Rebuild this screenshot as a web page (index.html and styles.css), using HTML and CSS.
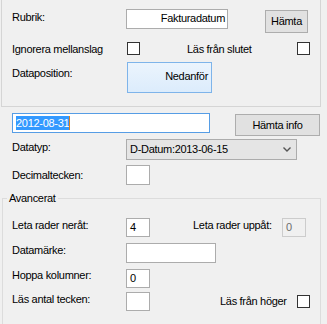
FILE: index.html
```html
<!DOCTYPE html>
<html lang="sv">
<head>
<meta charset="utf-8">
<link rel="stylesheet" href="styles.css">
</head>
<body>
<div class="top">
  <div class="row r1">
    <span class="lbl w114 mt2">Rubrik:</span>
    <div class="tb rubrik">Fakturadatum</div>
    <div class="btn hamta">Hämta</div>
  </div>
  <div class="row r2">
    <span class="lbl w115 mt1">Ignorera mellanslag</span>
    <span class="cb"></span>
    <span class="lbl slut mt1">Läs från slutet</span>
    <span class="cb"></span>
  </div>
  <div class="row r3">
    <span class="lbl w115 mt5">Dataposition:</span>
    <div class="btn nedan">Nedanför</div>
  </div>
</div>
<div class="mid">
  <div class="row r4">
    <div class="tb date"><span class="sel">2012-08-31</span><span class="caret"></span></div>
    <div class="btn info">Hämta info</div>
  </div>
  <div class="row r5">
    <span class="lbl w114 mt2">Datatyp:</span>
    <div class="dd"><span>D-Datum:2013-06-15</span>
      <svg class="chev" width="8" height="5" viewBox="0 0 8 5"><polyline points="0.5,0.5 4,4 7.5,0.5" fill="none" stroke="#555" stroke-width="1.4"/></svg>
    </div>
  </div>
  <div class="row r6">
    <span class="lbl w114 mt4">Decimaltecken:</span>
    <div class="tb small h20"></div>
  </div>
</div>
<fieldset class="group">
  <legend>Avancerat</legend>
  <div class="row g1">
    <span class="lbl w114 mt1">Leta rader neråt:</span>
    <div class="tb small">4</div>
    <span class="lbl upp mt1">Leta rader uppåt:</span>
    <div class="tb small dis">0</div>
  </div>
  <div class="row g2">
    <span class="lbl w114 mt1">Datamärke:</span>
    <div class="tb marke"></div>
  </div>
  <div class="row g3">
    <span class="lbl w114">Hoppa kolumner:</span>
    <div class="tb small">0</div>
  </div>
  <div class="row g4">
    <span class="lbl w114 mt1">Läs antal tecken:</span>
    <div class="tb small"></div>
    <span class="lbl hoger mt3">Läs från höger</span>
    <span class="cb mt3"></span>
  </div>
</fieldset>
</body>
</html>
```
FILE: styles.css
```css
* { box-sizing: border-box; }
html, body { margin: 0; padding: 0; }
body {
  background: #f0f0f0;
  font-family: "Liberation Sans", Arial, sans-serif;
  font-size: 11px;
  line-height: 13px;
  letter-spacing: -0.3px;
  color: #000;
  width: 327px;
  height: 324px;
  overflow: hidden;
}
.row { display: flex; align-items: flex-start; }
.lbl { flex: none; white-space: nowrap; }
.w114 { width: 114px; }
.w115 { width: 115px; }
.mt1 { margin-top: 1px; }
.mt2 { margin-top: 2px; }
.mt3 { margin-top: 3px; }
.mt4 { margin-top: 4px; }
.mt5 { margin-top: 5px; }

.tb {
  flex: none;
  background: #fff;
  border: 1px solid #acacac;
  padding: 1px 2px;
  white-space: nowrap;
  overflow: hidden;
}
.btn {
  flex: none;
  display: flex;
  align-items: center;
  justify-content: center;
  background: #e1e1e1;
  border: 1px solid #adadad;
}
.cb {
  flex: none;
  width: 13px;
  height: 13px;
  border: 1px solid #333;
  background: #fff;
}

/* top panel */
.top {
  margin-left: 1px;
  width: 320px;
  height: 107px;
  border: 1px solid #d5d5d5;
  border-top: none;
  padding: 9px 0 0 10px;
}
.r1 { height: 24px; }
.rubrik { width: 102px; height: 20px; text-align: right; padding-top: 2px; }
.hamta { margin-left: 37px; margin-top: 1px; width: 43px; height: 23px; }
.r2 { margin-top: 9px; height: 13px; }
.slut { margin-left: 47px; width: 110px; }
.r3 { margin-top: 7px; height: 31px; }
.nedan {
  width: 85px;
  height: 31px;
  justify-content: flex-end;
  padding: 0 3px 3px 0;
  background: linear-gradient(#ebf4fd, #dcecfc);
  border-color: #7eb4ea;
}

/* middle */
.mid { padding-left: 12px; }
.r4 { margin-top: 6px; height: 23px; }
.date {
  width: 198px;
  height: 20px;
  border-color: #569de5;
  padding: 2px 3px 0;
  line-height: 14px;
  display: flex;
}
.sel { background: #3399ff; color: #fff; height: 14px; }
.caret { width: 1px; height: 14px; background: #d9801f; }
.info { margin-left: 25px; margin-top: 1px; width: 85px; height: 22px; }
.r5 { margin-top: 3px; height: 21px; }
.dd {
  flex: none;
  width: 171px;
  height: 21px;
  display: flex;
  align-items: center;
  justify-content: space-between;
  background: #e5e5e5;
  border: 1px solid #acacac;
  padding: 0 5px 1px 3px;
}
.chev { display: block; margin-top: 1px; }
.r6 { margin-top: 5px; height: 20px; }
.small { width: 24px; height: 19px; padding: 2px 3px 0; }
.h20 { height: 20px; }

/* group */
.group {
  margin: 7px 0 0 2px;
  width: 319px;
  height: 132px;
  min-width: 0;
  border: 1px solid #dcdcdc;
  border-bottom: none;
  padding: 0 0 0 4px;
}
.group legend {
  padding: 0 2px;
  line-height: 12px;
}
.group .row { margin-left: 5px; }
.g1 { margin-top: 14px; height: 19px; }
.upp { margin-left: 43px; width: 89px; }
.dis { background: #f0f0f0; border-color: #cccccc; color: #6d6d6d; }
.g2 { margin-top: 6px; height: 20px; }
.marke { width: 90px; height: 20px; }
.g3 { margin-top: 6px; height: 19px; }
.g4 { margin-top: 4px; height: 19px; }
.hoger { margin-left: 70px; width: 77px; }
```
